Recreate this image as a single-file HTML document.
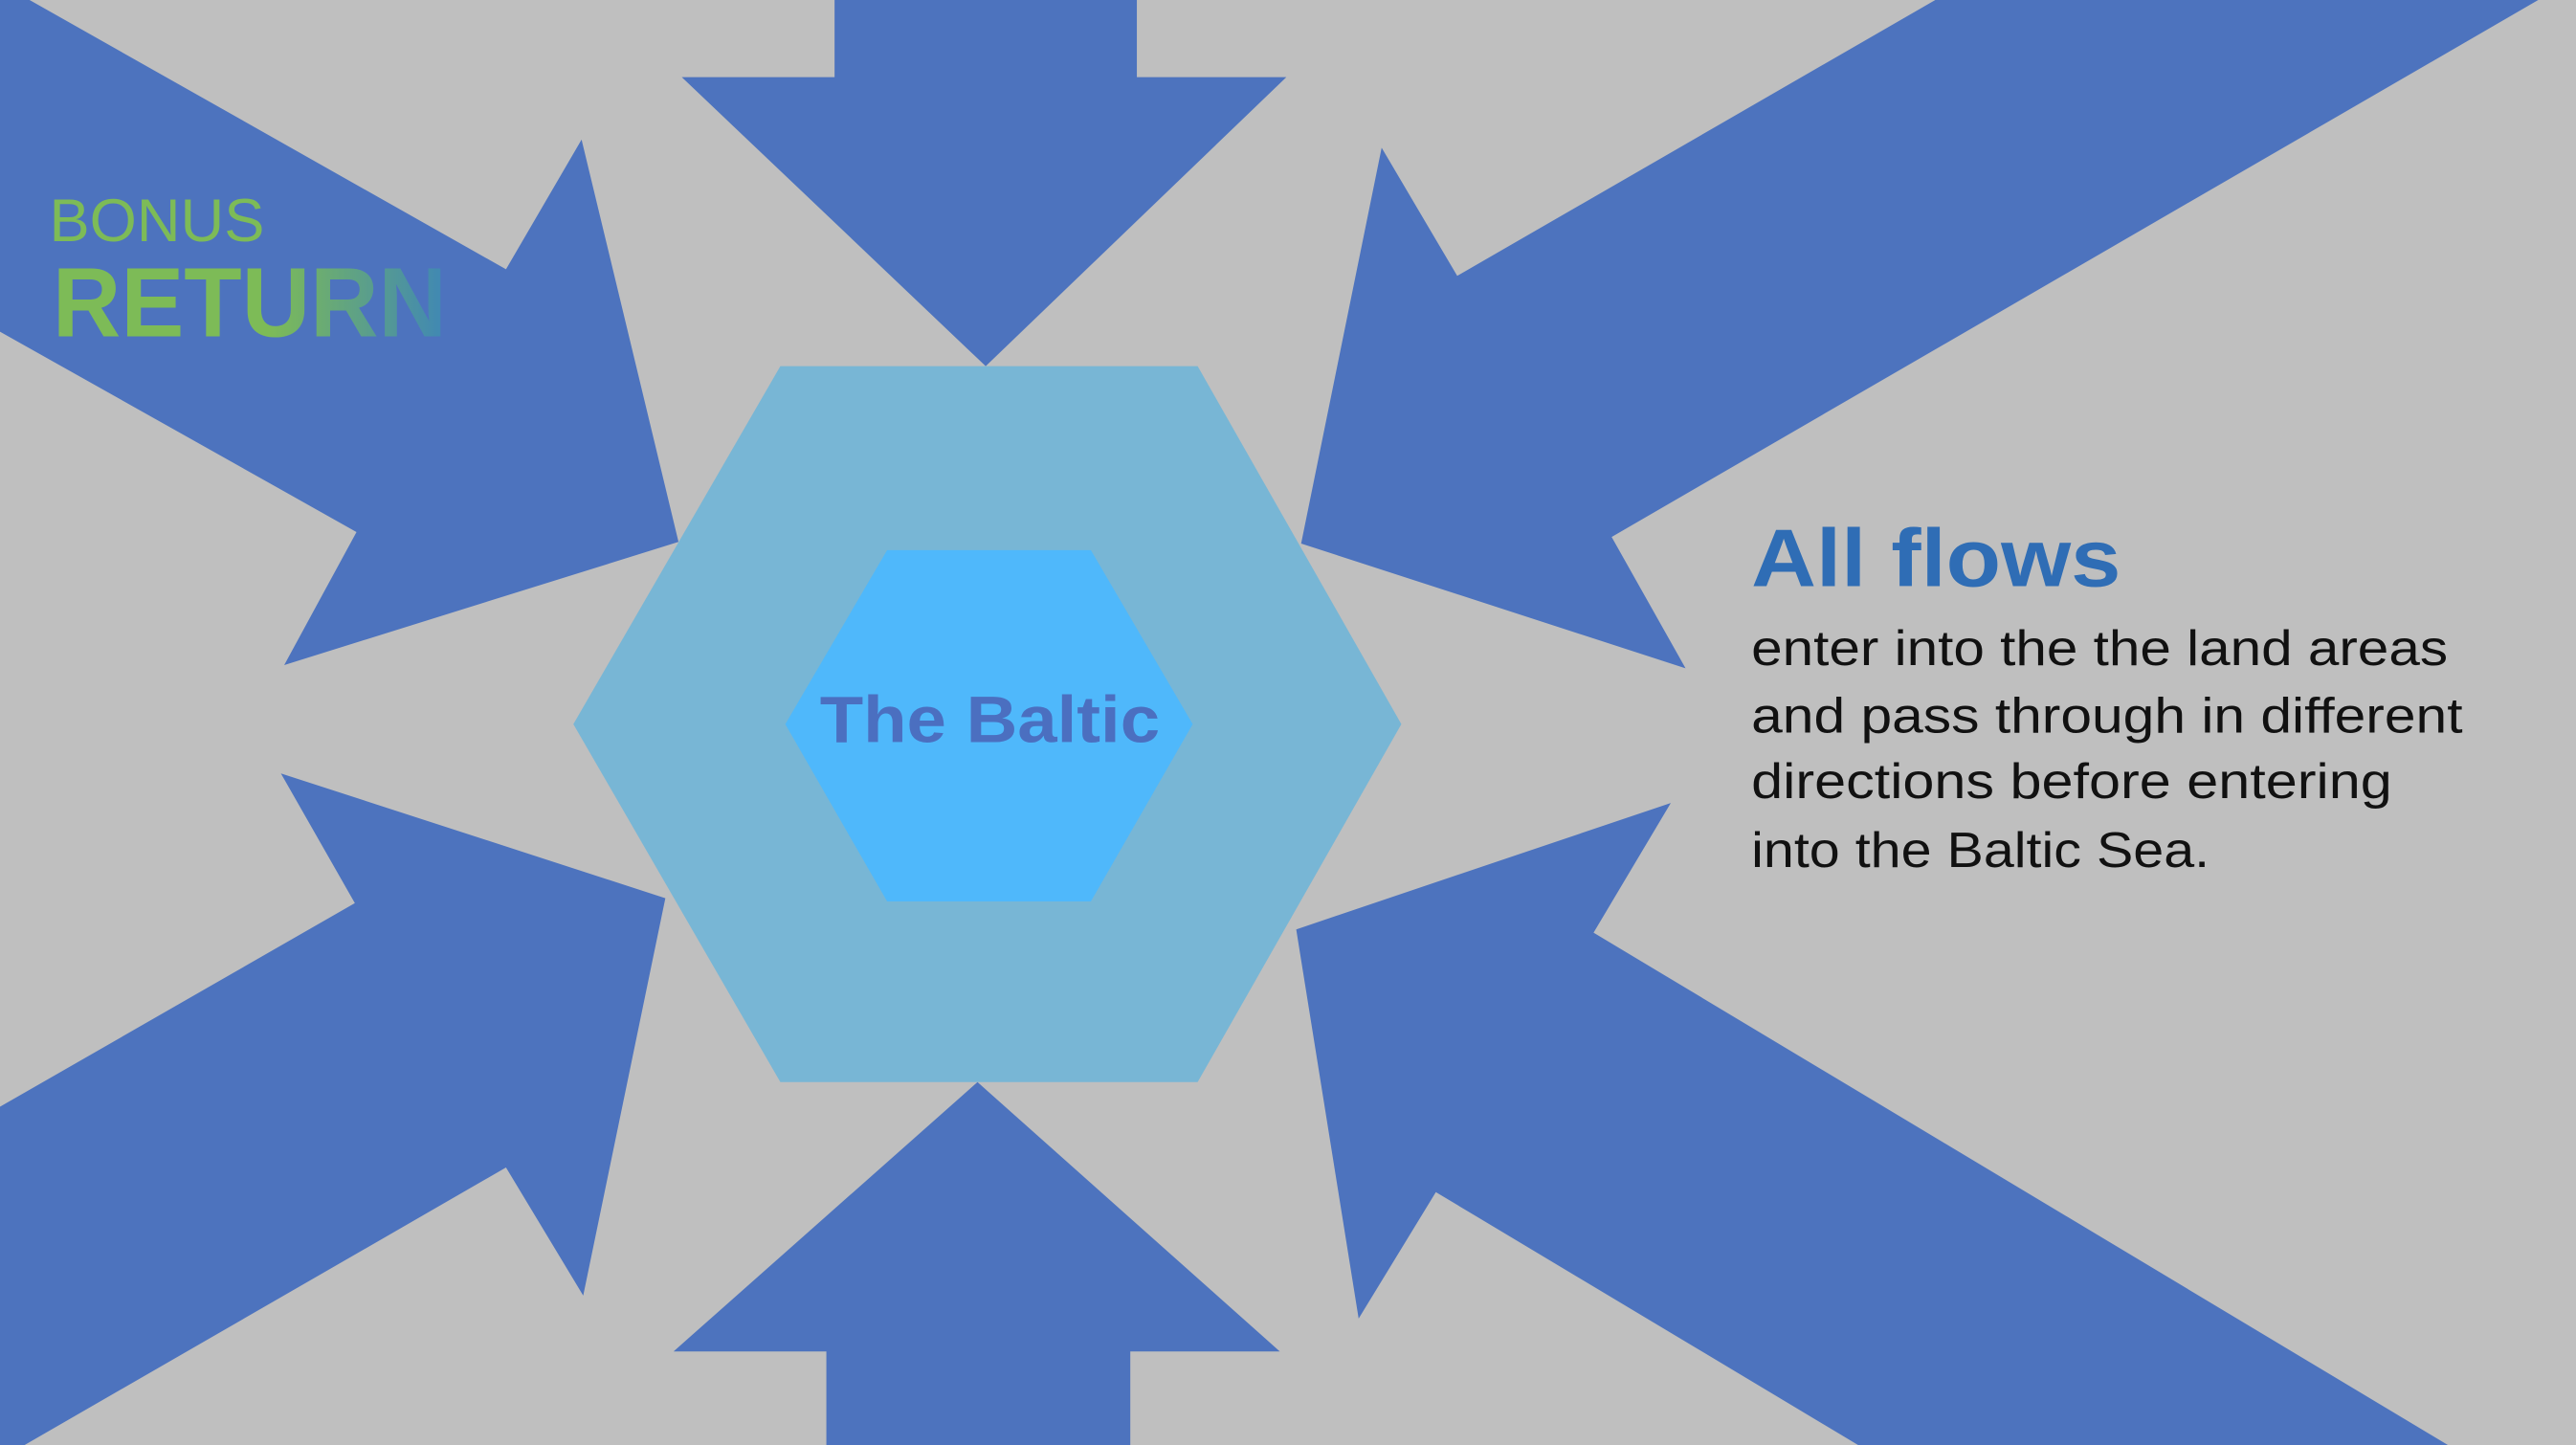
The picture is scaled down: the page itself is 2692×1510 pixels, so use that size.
<!DOCTYPE html>
<html><head><meta charset="utf-8"><style>
html,body{margin:0;padding:0;background:#bfbfbf;}
svg{display:block;width:2692px;height:1510px;}
</style></head><body>
<svg viewBox="0 0 1568 880" preserveAspectRatio="none" xmlns="http://www.w3.org/2000/svg">
<defs><linearGradient id="g" x1="0" x2="1" y1="0" y2="0"><stop offset="0.55" stop-color="#7dbb57"/><stop offset="1" stop-color="#3f87b5"/></linearGradient></defs>
<rect width="1568" height="880" fill="#bfbfbf"/>
<g fill="#4d73be">
<polygon points="508,0 692,0 692,47 783,47 600,223 415,47 508,47"/>
<polygon points="503,880 688,880 688,823 779,823 595,659 410,823 503,823"/>
<polygon points="0,0 18,0 308,164 354,85 413,330 173,405 217,324 0,202"/>
<polygon points="0,674 216,550 171,471 405,547 355,789 308,711 15,880 0,880"/>
<polygon points="1178,0 1545,0 981,327 1026,407 792,331 841,90 887,168"/>
<polygon points="1490,880 1131,880 874,726 827,803 789,566 1017,489 970,568"/>
</g>
<polygon points="475,223 729,223 853,441 729,659 475,659 349,441" fill="#78b6d5"/>
<polygon points="540,335 664,335 726,441 664,549 540,549 478,441" fill="#4fb8fb"/>
<text x="499" y="452" font-family="Liberation Sans, sans-serif" font-weight="bold" font-size="40" fill="#4b6fc0" textLength="207" lengthAdjust="spacingAndGlyphs">The Baltic</text>
<text x="1066" y="357" font-family="Liberation Sans, sans-serif" font-weight="bold" font-size="50" fill="#2f6db5" textLength="225" lengthAdjust="spacingAndGlyphs">All flows</text>
<g font-family="Liberation Sans, sans-serif" font-size="30" fill="#111" lengthAdjust="spacingAndGlyphs">
<text x="1066" y="405" textLength="424" lengthAdjust="spacingAndGlyphs">enter into the the land areas</text>
<text x="1066" y="446" textLength="433" lengthAdjust="spacingAndGlyphs">and pass through in different</text>
<text x="1066" y="486" textLength="390" lengthAdjust="spacingAndGlyphs">directions before entering</text>
<text x="1066" y="528" textLength="279" lengthAdjust="spacingAndGlyphs">into the Baltic Sea.</text>
</g>
<text x="30" y="147" font-family="Liberation Sans, sans-serif" font-size="37" fill="#7dbb57" textLength="131" lengthAdjust="spacingAndGlyphs">BONUS</text>
<text x="32" y="205" font-family="Liberation Sans, sans-serif" font-weight="bold" font-size="60" fill="url(#g)" textLength="240" lengthAdjust="spacingAndGlyphs">RETURN</text>
</svg>
</body></html>
